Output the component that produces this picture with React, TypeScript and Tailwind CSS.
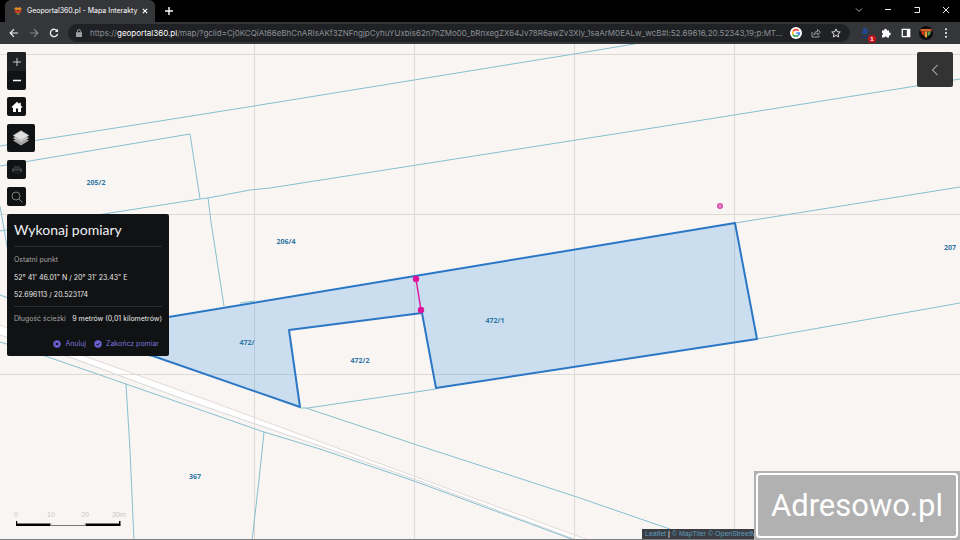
import type { ReactNode } from "react";

const gridX = [254, 414, 574, 734];
const gridY = [54, 214, 374];

const boundaries = [
  "0,146 160,121 254,106 414,80 574,54 640,43",
  "0,166 190,134 200,199",
  "0,231 110,213 200,199 208,198 250,190 270,188 640,130 734,115 960,79",
  "208,198 211,222 224,306",
  "0,206 8,252 16,300",
  "735,223 960,187",
  "757,339 960,303",
  "300,408 308,408 436,389",
  "0,295 80,325 160,356",
  "306,408 414,444 574,496 690,536",
  "0,342 48,357 126,384 264,432 320,449 414,481 577,541",
  "126,384 130,450 134,541",
  "264,432 259,480 252,541",
  "240,303 254,301",
];

const parcels = [
  { id: "205/2", x: 96, y: 185 },
  { id: "206/4", x: 286, y: 244 },
  { id: "472/", x: 247, y: 345 },
  { id: "472/1", x: 495, y: 323 },
  { id: "472/2", x: 360, y: 363 },
  { id: "207", x: 950, y: 250 },
  { id: "367", x: 195, y: 479 },
];

function IconButton({
  label,
  className,
  children,
}: {
  label: string;
  className?: string;
  children: ReactNode;
}) {
  return (
    <button
      type="button"
      aria-label={label}
      className={`flex shrink-0 items-center justify-center ${className ?? ""}`}
    >
      {children}
    </button>
  );
}

function TabStrip() {
  return (
    <div className="flex h-[22px] items-end justify-between bg-black pl-[5px] text-white">
      <div className="flex items-center">
        <div className="flex h-[22px] w-[150px] items-center rounded-t-md bg-[#35363a] pl-2 pr-1">
          <svg className="h-[10px] w-[10px] shrink-0" viewBox="0 0 10 10">
            <path d="M1 3 3 1 5 2 7 1 9 3 7 4H3Z" fill="#dd8a22" />
            <path d="M1 5 3 4 5 5 7 4 9 5 7 7H3Z" fill="#d43a26" />
            <path d="M3 8 5 7 7 8 5 9Z" fill="#6d8f3c" />
          </svg>
          <span className="ml-1 min-w-0 flex-1 whitespace-nowrap font-['Inter',sans-serif] text-[7px] leading-3">
            Geoportal360.pl - Mapa Interakty
          </span>
          <IconButton label="Zamknij kartę" className="h-3 w-3">
            <svg className="h-[6px] w-[6px]" viewBox="0 0 6 6" stroke="#fff" strokeWidth="1.1">
              <path d="M.8.8 5.2 5.2M5.2.8.8 5.2" />
            </svg>
          </IconButton>
        </div>
        <IconButton label="Nowa karta" className="ml-2 h-4 w-3">
          <svg className="h-2 w-2" viewBox="0 0 8 8" stroke="#fff" strokeWidth="1.4">
            <path d="M4 0V8M0 4H8" />
          </svg>
        </IconButton>
      </div>
      <div className="flex h-6 items-center">
        <IconButton label="Szukaj kart" className="h-4 w-[29px]">
          <svg className="h-2 w-2" viewBox="0 0 8 8" fill="none" stroke="#aaa" strokeWidth="1">
            <path d="M1 2.5 4 5.5 7 2.5" />
          </svg>
        </IconButton>
        <IconButton label="Minimalizuj" className="h-4 w-[29px]">
          <svg className="h-2 w-2" viewBox="0 0 8 8" stroke="#eee" strokeWidth="1">
            <path d="M1 3.5H7" />
          </svg>
        </IconButton>
        <IconButton label="Przywróć" className="h-4 w-[29px]">
          <svg className="h-2 w-2" viewBox="0 0 8 8" fill="none" stroke="#eee" strokeWidth="1">
            <path d="M1.5 1.5H6.5V6.5H1.5" />
          </svg>
        </IconButton>
        <IconButton label="Zamknij" className="h-4 w-[29px]">
          <svg className="h-2 w-2" viewBox="0 0 8 8" stroke="#eee" strokeWidth="1">
            <path d="M1 1 7 7M7 1 1 7" />
          </svg>
        </IconButton>
      </div>
    </div>
  );
}

function Toolbar() {
  return (
    <div className="flex h-[22px] items-center bg-[#35363a] pl-1 pr-1">
      <IconButton label="Wstecz" className="h-5 w-5">
        <svg className="h-[10px] w-[10px]" viewBox="0 0 10 10" fill="none" stroke="#eee" strokeWidth="1.2">
          <path d="M9 5H1.5M5 1.2 1.2 5 5 8.8" />
        </svg>
      </IconButton>
      <IconButton label="Dalej" className="h-5 w-5">
        <svg className="h-[10px] w-[10px]" viewBox="0 0 10 10" fill="none" stroke="#85868a" strokeWidth="1.2">
          <path d="M1 5H8.5M5 1.2 8.8 5 5 8.8" />
        </svg>
      </IconButton>
      <IconButton label="Odśwież" className="h-5 w-5">
        <svg className="h-[10px] w-[10px]" viewBox="0 0 10 10" fill="none" stroke="#eee" strokeWidth="1.3">
          <path d="M8.3 3.2A3.7 3.7 0 1 0 8.6 6" />
          <path d="M9 .8V4H5.8Z" fill="#eee" stroke="none" />
        </svg>
      </IconButton>
      <div className="ml-1 flex h-[18px] min-w-0 flex-1 items-center rounded-full bg-[#202124] pl-2 pr-1">
        <svg className="h-2 w-[6px] shrink-0" viewBox="0 0 6 8">
          <path d="M0 3.2H6V8H0Z" fill="#9aa0a6" />
          <path d="M1.4 3.5V2.2A1.6 1.6 0 0 1 4.6 2.2V3.5" fill="none" stroke="#9aa0a6" strokeWidth=".9" />
        </svg>
        <div className="ml-2 min-w-0 flex-1 whitespace-nowrap font-['Inter',sans-serif] text-[8px] leading-3 text-[#8b9096]">
          https://<span className="text-white">geoportal360.pl</span>
          /map/?gclid=Cj0KCQiAt66eBhCnARIsAKf3ZNFngjpCyhuYUxbis62n7hZMo00_bRnxegZX64Jv78R6awZv3XIy_1saArM0EALw_wcB#l:52.69616,20.52343,19;p:MT...
        </div>
        <IconButton label="Google" className="h-4 w-5">
          <svg className="h-3 w-3" viewBox="0 0 12 12" fill="none" strokeWidth="1.6">
            <circle cx="6" cy="6" r="6" fill="#fff" />
            <path d="M8.6 3.7A3.4 3.4 0 0 0 3 4.5" stroke="#ea4335" />
            <path d="M3 4.5A3.4 3.4 0 0 0 3 7.5" stroke="#fbbc05" />
            <path d="M3 7.5A3.4 3.4 0 0 0 8.3 8.4" stroke="#34a853" />
            <path d="M8.3 8.4A3.4 3.4 0 0 0 9.4 6H6.2" stroke="#4285f4" />
          </svg>
        </IconButton>
        <IconButton label="Udostępnij" className="h-4 w-5">
          <svg className="h-[10px] w-[10px]" viewBox="0 0 10 10" fill="none" stroke="#a5a8ac" strokeWidth=".9">
            <path d="M1 4V9H8V7.5" />
            <path d="M3 7C3 4.5 4.5 3.5 6.5 3.5V1.5L9.4 4.3 6.5 6.8V5.2C5 5.2 3.8 5.7 3 7Z" />
          </svg>
        </IconButton>
        <IconButton label="Dodaj zakładkę" className="h-4 w-5">
          <svg className="h-[10px] w-[10px]" viewBox="0 0 10 10" fill="none" stroke="#eee" strokeWidth=".9">
            <path d="M5 .9 6.2 3.7 9.3 4 7 6 7.7 9 5 7.4 2.3 9 3 6 .7 4 3.8 3.7Z" />
          </svg>
        </IconButton>
      </div>
      <div className="flex items-center pl-[6px]">
        <IconButton label="Rozszerzenie, 1 powiadomienie" className="relative h-5 w-5">
          <svg className="h-3 w-3" viewBox="0 0 12 12">
            <path d="M3 1H7V4H9L5.5 8 1 5 3 4Z" fill="#24468c" />
            <path d="M1 8 6 10.5 10 8V9.5L6 12 1 9.5Z" fill="#1b376f" />
          </svg>
          <span className="absolute right-0 bottom-0 flex h-2 w-2 items-center justify-center rounded-full bg-[#c5121c] font-['Liberation_Sans',sans-serif] text-[6px] leading-none font-bold text-white">
            1
          </span>
        </IconButton>
        <IconButton label="Rozszerzenia" className="h-5 w-5">
          <svg className="h-[10px] w-[10px]" viewBox="0 0 10 10" fill="#fff">
            <path d="M1 2.5H3.2A1.35 1.35 0 1 1 5.8 2.5H8V4.7A1.35 1.35 0 1 1 8 7.3V9.5H5.8A1.35 1.35 0 0 0 3.2 9.5H1V7.2A1.3 1.3 0 0 0 1 4.7Z" />
          </svg>
        </IconButton>
        <IconButton label="Panel boczny" className="h-5 w-5">
          <svg className="h-[10px] w-[10px]" viewBox="0 0 10 10">
            <path d="M1.3 1.3H8.7V8.7H1.3Z" fill="none" stroke="#fff" strokeWidth="1.3" />
            <path d="M5.8 1H9V9H5.8Z" fill="#fff" />
          </svg>
        </IconButton>
        <IconButton label="Profil" className="h-5 w-5">
          <svg className="h-[14px] w-[14px]" viewBox="0 0 14 14">
            <circle cx="7" cy="7" r="7" fill="#0c0c0c" />
            <path d="M1.5 3H12.5V5.5H1.5Z" fill="#d9622a" />
            <path d="M2.5 5.5H5V9.5L2.5 8Z" fill="#d5321f" />
            <path d="M5.5 5.5H8V12L5.5 10.5Z" fill="#ef9b34" />
            <path d="M8.5 5.5H11.5V8L8.5 10.5Z" fill="#5f9a60" />
          </svg>
        </IconButton>
        <IconButton label="Menu" className="h-5 w-5">
          <svg className="h-[10px] w-[10px]" viewBox="0 0 10 10" fill="#fff">
            <circle cx="5" cy="1.3" r="1" />
            <circle cx="5" cy="5" r="1" />
            <circle cx="5" cy="8.7" r="1" />
          </svg>
        </IconButton>
      </div>
    </div>
  );
}

function ParcelMap() {
  return (
    <svg
      className="absolute inset-0 h-full w-full"
      viewBox="0 44 960 495"
      preserveAspectRatio="xMidYMid slice"
      role="img"
      aria-label="Mapa działek"
    >
      <path d="M0 325 87 357 207 400 280 427 591 541H577L414 479 320 446 264 427 183 399 72 358 0 335Z" fill="#fff" />
      <path d="M0 325 87 357 207 400 280 427 591 541" fill="none" stroke="#e2dad8" />
      <path d="M577 540 414 479 320 446 264 427 183 399 72 358 0 335" fill="none" stroke="#d8d8d8" />

      {/* Tile seams */}
      <g stroke="#dedad7" strokeWidth="1">
        {gridX.map((x) => (
          <path key={x} d={`M${x}.5 44V540`} />
        ))}
        {gridY.map((y) => (
          <path key={y} d={`M0 ${y}.5H960`} />
        ))}
      </g>

      <g fill="none" stroke="#86bfd0" strokeWidth="1">
        {boundaries.map((points) => (
          <polyline key={points} points={points} />
        ))}
      </g>

      {/* Selected parcel */}
      <path
        d="M60 335 415 276 735 223 757 339 436 388 422 313 289 330 300 407 153 356Z"
        fill="#298de8"
        fillOpacity=".22"
        stroke="#2b77c5"
        strokeWidth="2"
        strokeLinejoin="round"
      />

      <g
        fill="#2f75a6"
        textAnchor="middle"
        className="font-['Open_Sans',sans-serif] text-[7px] font-bold"
      >
        {parcels.map((parcel) => (
          <text key={parcel.id} x={parcel.x} y={parcel.y}>
            {parcel.id}
          </text>
        ))}
      </g>

      {/* Measured path */}
      <path d="M416 279 421 310" stroke="#dd1c9c" strokeWidth="1.5" />
      <circle cx="416" cy="279" r="3.2" fill="#e0149a" />
      <circle cx="421" cy="310" r="3.2" fill="#e0149a" />
      <circle cx="720" cy="206" r="2.3" fill="#e793c6" stroke="#de4bab" strokeWidth="1.5" />
    </svg>
  );
}

function MeasurePanel() {
  return (
    <section className="mt-2 w-[162px] rounded-xs bg-[#111213] px-[7px] pb-[7px] font-['Inter',sans-serif] text-[7px] leading-[10px] text-[#e8e8e8]">
      <h2 className="border-b border-[#2c2d2f] pt-2 pb-2 font-['Lato',sans-serif] text-[14px] leading-4 text-[#eef0f4]">
        Wykonaj pomiary
      </h2>
      <p className="mt-2 text-[#a5a5a5]">Ostatni punkt</p>
      <p className="mt-2">52° 41' 46.01" N / 20° 31' 23.43" E</p>
      <p className="mt-[7px]">52.696113 / 20.523174</p>
      <div className="mt-[6px] flex justify-between border-t border-[#2c2d2f] pt-[7px] whitespace-nowrap">
        <span className="text-[#a5a5a5]">Długość ścieżki</span>
        <span>9 metrów (0,01 kilometrów)</span>
      </div>
      <div className="mt-[15px] flex justify-end gap-2 pr-[3px] text-[#7a72dc]">
        <button type="button" className="flex items-center gap-1">
          <svg className="h-2 w-2" viewBox="0 0 8 8">
            <circle cx="4" cy="4" r="3.7" fill="#6a62d2" />
            <path d="M2.6 2.6 5.4 5.4M5.4 2.6 2.6 5.4" stroke="#111213" />
          </svg>
          Anuluj
        </button>
        <button type="button" className="flex items-center gap-1">
          <svg className="h-2 w-2" viewBox="0 0 8 8">
            <circle cx="4" cy="4" r="3.7" fill="#6a62d2" />
            <path d="M2.3 4 3.6 5.3 5.8 2.9" fill="none" stroke="#111213" />
          </svg>
          Zakończ pomiar
        </button>
      </div>
    </section>
  );
}

function MapControls() {
  return (
    <div className="absolute top-2 left-[7px] flex flex-col items-start">
      <div className="flex flex-col rounded-xs bg-[#111213]">
        <IconButton label="Przybliż" className="h-[19px] w-[19px] rounded-t-xs bg-[#1f2022]">
          <svg className="h-2 w-2" viewBox="0 0 8 8" stroke="#c9c9c9" strokeWidth="1">
            <path d="M4 0V8M0 4H8" />
          </svg>
        </IconButton>
        <IconButton label="Oddal" className="h-[19px] w-[19px]">
          <svg className="h-2 w-2" viewBox="0 0 8 8" stroke="#fff" strokeWidth="1.5">
            <path d="M0 3.5H8" />
          </svg>
        </IconButton>
      </div>
      <IconButton label="Strona główna" className="mt-[7px] h-[19px] w-[19px] rounded-xs bg-[#111213]">
        <svg className="h-3 w-3" viewBox="0 0 12 12" fill="#fff">
          <path d="M6 .8.5 6 1.3 6.9 2 6.3V11H5V7.5H7V11H10V6.3L10.7 6.9 11.5 6 9.8 4.4V1.7H8.3V3Z" />
        </svg>
      </IconButton>
      <IconButton label="Warstwy" className="mt-2 h-7 w-7 rounded-xs bg-[#111213]">
        <svg className="h-[18px] w-[18px]" viewBox="0 0 18 18">
          <path d="M1 11.5 9 8 17 11.5 9 16.5Z" fill="#a5a5a5" />
          <path d="M1 9 9 5 17 9 9 14Z" fill="#c4c4c4" stroke="#777" strokeWidth=".4" />
          <path d="M1 6.5 9 1.5 17 6.5 9 11.5Z" fill="#dedede" stroke="#888" strokeWidth=".4" />
        </svg>
      </IconButton>
      <IconButton label="Drukuj" className="mt-2 h-[19px] w-[19px] rounded-xs bg-[#111213]">
        <svg className="h-[10px] w-3" viewBox="0 0 12 10">
          <path d="M3 1H9V3H3Z" fill="#303133" />
          <path d="M1 3.5H11V7H9V5.5H3V7H1Z" fill="#434446" />
          <path d="M3.5 6.5H8.5V9H3.5Z" fill="#222325" />
        </svg>
      </IconButton>
      <IconButton label="Szukaj" className="mt-2 h-[19px] w-[19px] rounded-xs bg-[#111213]">
        <svg className="h-3 w-3" viewBox="0 0 12 12" fill="none" stroke="#8a8a8a" strokeWidth=".9">
          <circle cx="5" cy="5" r="4" />
          <path d="M8 8 11.3 11.3" />
        </svg>
      </IconButton>
      <MeasurePanel />
    </div>
  );
}

function ScaleBar() {
  return (
    <div className="absolute bottom-[13px] left-3 font-['Liberation_Sans',sans-serif] text-[7px] leading-[10px] text-[#cbc8c6]">
      <div className="flex">
        <span className="w-[35px] pl-[2px]">0</span>
        <span className="w-[34px]">10</span>
        <span className="w-[31px]">20</span>
        <span>30m</span>
      </div>
      <svg className="ml-1 h-[6px] w-[105px]" viewBox="0 0 105 6">
        <path d="M0 1H1.2V3.5H34.5V6H0ZM69.5 3.5H103V1H104.5V6H69.5Z" fill="#000" />
        <path d="M34.5 5.5H69.5" stroke="#777" />
        <path d="M35 3V6M69 3V6" stroke="#999" strokeWidth=".7" />
      </svg>
    </div>
  );
}

export default function App() {
  return (
    <div className="relative flex h-screen flex-col overflow-hidden bg-[#f9f5f2]">
      <header>
        <TabStrip />
        <Toolbar />
      </header>
      <main className="relative min-h-0 flex-1 overflow-hidden border-b border-[#7d7d7d]">
        <ParcelMap />
        <MapControls />
        <IconButton
          label="Rozwiń panel"
          className="absolute top-2 right-[7px] h-[35px] w-9 rounded-xs bg-[#333334]"
        >
          <svg className="h-3 w-2" viewBox="0 0 8 12" fill="none" stroke="#ddd" strokeWidth="1">
            <path d="M6.5 1 1.5 6 6.5 11" />
          </svg>
        </IconButton>
        <ScaleBar />
        <div className="absolute right-0 bottom-0 flex h-[10px] w-[318px] gap-[2px] bg-[#3b3d42] pl-[3px] font-['Liberation_Sans',sans-serif] text-[7px] leading-[10px] whitespace-nowrap text-[#5d9cbc]">
          <a href="#leaflet">Leaflet</a>
          <span className="text-white">|</span>
          <a href="#maptiler">© MapTiler</a>
          <a href="#osm">© OpenStreetMap</a>
        </div>
      </main>
      <div className="absolute right-0 bottom-0 h-[69px] w-[206px] bg-[#b1b1b1] p-[2px]">
        <div className="flex h-full items-center justify-center rounded-sm border-2 border-white font-['Roboto',sans-serif] text-[31px] leading-9 text-white">
          Adresowo.pl
        </div>
      </div>
    </div>
  );
}
